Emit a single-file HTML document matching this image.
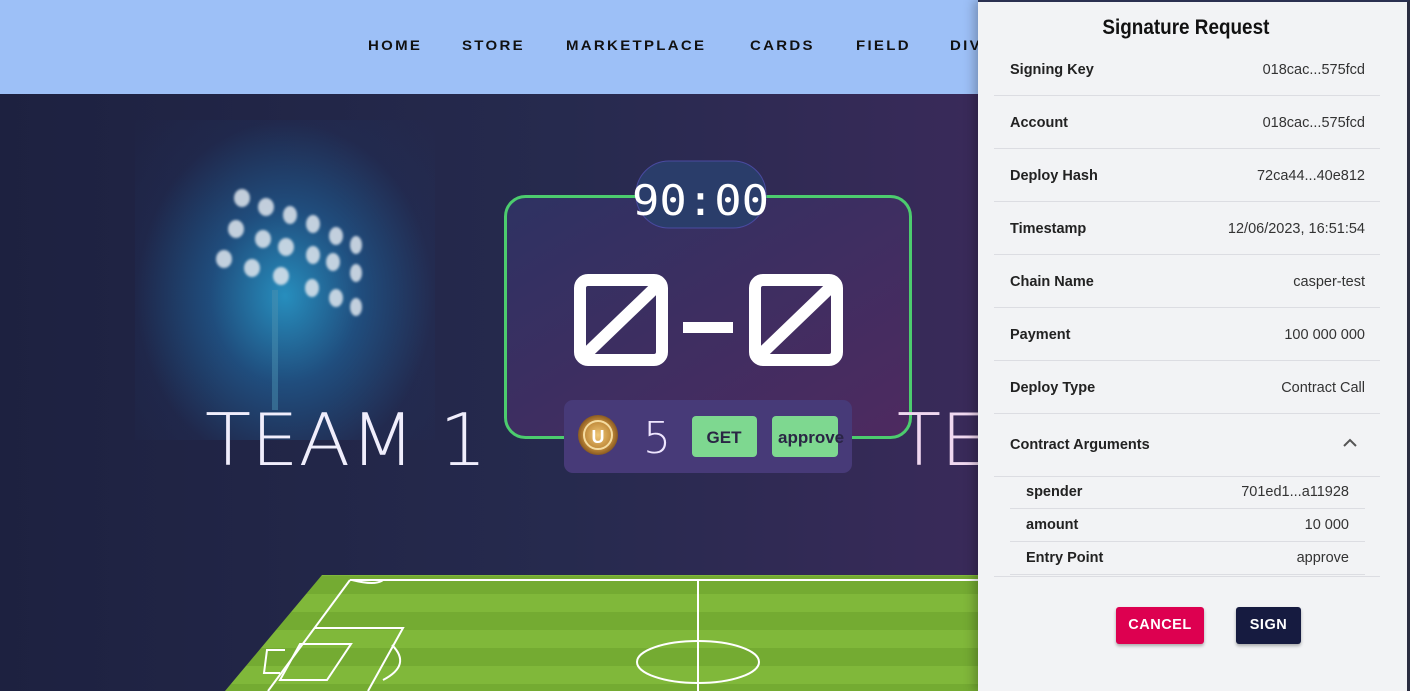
<!DOCTYPE html>
<html><head><meta charset="utf-8"><style>
*{margin:0;padding:0;box-sizing:border-box}
body{width:1410px;height:691px;overflow:hidden;position:relative;font-family:"Liberation Sans",sans-serif;background:linear-gradient(90deg,#1d2140 0%,#262a4e 40%,#3a2a5a 70%,#4a2456 100%)}
.nav{position:absolute;left:0;top:0;width:1410px;height:94px;background:#9dc0f7}
.nav span{position:absolute;top:37px;font:bold 15px "Liberation Sans",sans-serif;letter-spacing:2.3px;color:#111;transform:scaleY(.95)}
.glow{position:absolute;left:135px;top:120px;width:300px;height:320px;background:radial-gradient(ellipse at 50% 55%,rgba(40,160,210,.85) 0%,rgba(30,110,170,.55) 35%,rgba(30,60,110,.15) 70%,rgba(0,0,0,0) 100%)}
.row{position:absolute;left:994px;width:386px;height:53px;border-bottom:1px solid #dcdde2;font-size:14.5px;color:#222}
.row b{position:absolute;left:16px;top:19px}
.row i{position:absolute;right:15px;top:19px;font-style:normal;color:#333}
.sub{position:absolute;left:1010px;width:355px;height:33px;border-bottom:1px solid #dcdde2;font-size:14.5px;color:#222}
.sub b{position:absolute;left:16px;top:8px}
.sub i{position:absolute;right:16px;top:8px;font-style:normal;color:#333}
.btn{position:absolute;top:607px;height:37px;border-radius:3px;color:#fff;font-size:14.5px;font-weight:bold;letter-spacing:.5px;text-align:center;line-height:37px;box-shadow:0 2px 3px rgba(0,0,0,.3)}
</style></head><body>
<div class="glow"></div>
<svg style="position:absolute;left:0;top:0" width="978" height="691">
<defs><linearGradient id="sb" x1="0" x2="1" y1="0" y2="1"><stop offset="0" stop-color="#2e3262"/><stop offset="1" stop-color="#4e2a60"/></linearGradient>
<pattern id="st" width="10" height="36" patternUnits="userSpaceOnUse"><rect width="10" height="18" fill="#74ab32"/><rect y="18" width="10" height="18" fill="#80b83a"/></pattern>
<radialGradient id="coin"><stop offset="0" stop-color="#f0c878"/><stop offset=".7" stop-color="#c08a3a"/><stop offset="1" stop-color="#8a5a20"/></radialGradient>
<filter id="bl"><feGaussianBlur stdDeviation="1.2"/></filter></defs>
<rect x="272" y="290" width="6" height="120" fill="#4a8fb0" opacity=".5"/>
<g fill="#dfe6ee" opacity=".85" filter="url(#bl)">
<ellipse cx="242" cy="198" rx="8" ry="9"/><ellipse cx="266" cy="207" rx="8" ry="9"/><ellipse cx="290" cy="215" rx="7" ry="9"/><ellipse cx="313" cy="224" rx="7" ry="9"/><ellipse cx="336" cy="236" rx="7" ry="9"/><ellipse cx="356" cy="245" rx="6" ry="9"/>
<ellipse cx="236" cy="229" rx="8" ry="9"/><ellipse cx="263" cy="239" rx="8" ry="9"/><ellipse cx="286" cy="247" rx="8" ry="9"/><ellipse cx="313" cy="255" rx="7" ry="9"/><ellipse cx="333" cy="262" rx="7" ry="9"/><ellipse cx="356" cy="273" rx="6" ry="9"/>
<ellipse cx="224" cy="259" rx="8" ry="9"/><ellipse cx="252" cy="268" rx="8" ry="9"/><ellipse cx="281" cy="276" rx="8" ry="9"/><ellipse cx="312" cy="288" rx="7" ry="9"/><ellipse cx="336" cy="298" rx="7" ry="9"/><ellipse cx="356" cy="307" rx="6" ry="9"/></g>
<polygon points="322,575 978,575 978,691 225,691" fill="url(#st)"/>
<g stroke="#fff" stroke-width="2" fill="none">
<polyline points="350,580 978,580"/><line x1="350" y1="580" x2="268" y2="691"/>
<line x1="698" y1="580" x2="698" y2="691"/><ellipse cx="698" cy="662" rx="61" ry="21"/>
<polyline points="315,628 403,628 368,691"/><polygon points="300,644 351,644 327,680 280,680"/><polyline points="285,650 267,650 264,673 280,673"/>
<path d="M392,645 Q412,665 383,680"/><path d="M352,580 Q376,586 383,580"/></g>
<rect x="505.5" y="196.5" width="405" height="241" rx="20" fill="url(#sb)" stroke="#4ccc6e" stroke-width="3"/>
<rect x="636" y="161" width="130" height="67" rx="33" fill="#2a3d6a" stroke="#4a4aa0"/>
<text x="632" y="215" font-family="DejaVu Sans Mono" font-size="42" fill="#fff" textLength="137" lengthAdjust="spacingAndGlyphs">90:00</text>
<g stroke="#fff" stroke-width="12" fill="none" stroke-linejoin="round">
<rect x="580" y="280" width="82" height="80" rx="8"/><line x1="583" y1="357" x2="660" y2="283"/>
<rect x="755" y="280" width="82" height="80" rx="8"/><line x1="758" y1="357" x2="835" y2="283"/></g>
<rect x="683" y="322" width="50" height="11" fill="#fff"/>
<text x="205" y="465" font-family="DejaVu Sans" font-weight="200" font-size="72" fill="#f0eefc" textLength="282" lengthAdjust="spacingAndGlyphs">TEAM 1</text>
<text x="897" y="465" font-family="DejaVu Sans" font-weight="200" font-size="72" fill="#f0d8f0">TE</text>
<rect x="564" y="400" width="288" height="73" rx="9" fill="#473a78"/>
<circle cx="598" cy="435" r="20" fill="url(#coin)"/><circle cx="598" cy="435" r="14" fill="none" stroke="#f5dca0" stroke-width="2"/>
<text x="598" y="443" text-anchor="middle" font-size="18" font-weight="bold" fill="#fff">U</text>
<text x="643" y="453" font-family="DejaVu Sans" font-weight="200" font-size="44" fill="#efe6ff">5</text>
<rect x="692" y="416" width="65" height="41" rx="4" fill="#7ed890"/>
<text x="724" y="443" text-anchor="middle" font-size="17" font-weight="bold" fill="#2a2544">GET</text>
<rect x="772" y="416" width="66" height="41" rx="4" fill="#7ed890"/>
<text x="778" y="443" font-size="17" font-weight="bold" fill="#2a2544">approve</text>
</svg>
<div class="nav"><span style="left:368px">HOME</span><span style="left:462px">STORE</span><span style="left:566px">MARKETPLACE</span><span style="left:750px">CARDS</span><span style="left:856px">FIELD</span><span style="left:950px">DIV</span></div>
<div style="position:absolute;left:978px;top:0;width:432px;height:691px;background:#f2f3f5;border-top:2px solid #2a3050;border-right:3px solid #2a2d40;box-shadow:-4px 0 10px rgba(0,0,0,.25)">
<div style="position:absolute;left:0;width:462px;top:14px;text-align:center;font-size:21px;font-weight:bold;color:#111;transform:scaleX(.9);transform-origin:left">Signature Request</div></div>
<div class="row" style="top:43px"><b>Signing Key</b><i>018cac...575fcd</i></div>
<div class="row" style="top:96px"><b>Account</b><i>018cac...575fcd</i></div>
<div class="row" style="top:149px"><b>Deploy Hash</b><i>72ca44...40e812</i></div>
<div class="row" style="top:202px"><b>Timestamp</b><i>12/06/2023, 16:51:54</i></div>
<div class="row" style="top:255px"><b>Chain Name</b><i>casper-test</i></div>
<div class="row" style="top:308px"><b>Payment</b><i>100 000 000</i></div>
<div class="row" style="top:361px"><b>Deploy Type</b><i>Contract Call</i></div>
<div class="row" style="top:414px;height:63px"><b style="top:23px">Contract Arguments</b>
<svg style="position:absolute;left:349px;top:24px" width="14" height="10"><polyline points="1,8 7,2 13,8" fill="none" stroke="#555" stroke-width="2"/></svg></div>
<div class="sub" style="top:476px"><b>spender</b><i>701ed1...a11928</i></div>
<div class="sub" style="top:509px"><b>amount</b><i>10 000</i></div>
<div class="sub" style="top:542px"><b>Entry Point</b><i>approve</i></div>
<div style="position:absolute;left:994px;top:576px;width:386px;border-top:1px solid #dcdde2"></div>
<div class="btn" style="left:1116px;width:88px;background:#dd0050">CANCEL</div>
<div class="btn" style="left:1236px;width:65px;background:#161b40">SIGN</div>
</body></html>
